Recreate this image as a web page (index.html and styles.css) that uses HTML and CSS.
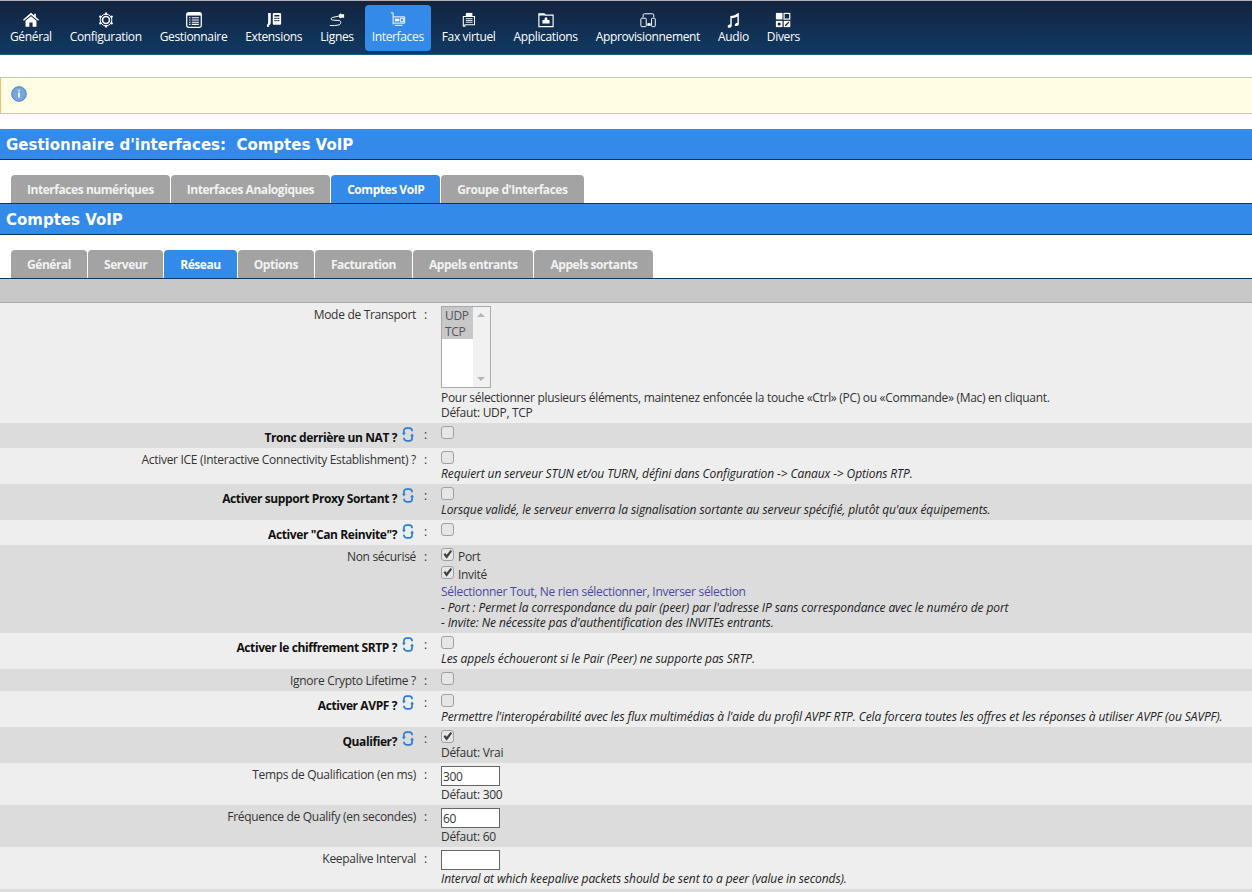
FILE: index.html
```html
<!DOCTYPE html>
<html lang="fr">
<head>
<meta charset="utf-8">
<title>Comptes VoIP</title>
<link rel="stylesheet" href="styles.css">
</head>
<body>
<svg class="defs" width="0" height="0" aria-hidden="true">
  <symbol id="refresh" viewBox="0 0 12 15">
    <path d="M1.9 6.5V4C1.9 2.3 3 1.2 4.6 1.2H7.4C9 1.2 10.1 2.3 10.1 4.2M10.1 8.5V11C10.1 12.7 9 13.8 7.4 13.8H4.6C3 13.8 1.9 12.7 1.9 10.8" fill="none" stroke="currentColor" stroke-width="1.7"/>
    <path d="M0 5.8H3.8L1.9 8.6ZM12 9.2H8.2L10.1 6.4Z" fill="currentColor"/>
  </symbol>
</svg>
<nav class="topnav">
  <a class="navitem"><svg class="ni" viewBox="0 0 20 18"><path fill="#fff" d="M10 0 14 3.4V1.2H16V5.1L20 8.6 18.8 10 10 2.8 1.2 10 0 8.6Z"/><path fill="#fff" d="M3.2 10 10 4.4 16.8 10V17.5H12V12H8V17.5H3.2Z"/></svg><span>Général</span></a>
  <a class="navitem"><svg class="ni" viewBox="0 0 18 18"><circle cx="9" cy="9" r="3.9" fill="none" stroke="#fff" stroke-width="1.8"/><circle cx="9" cy="9" r="6.6" fill="none" stroke="#fff" stroke-width="1.1"/><path stroke="#fff" stroke-width="2.4" d="M9 .5V3M9 15V17.5M1.6 4.7 3.8 6M14.2 12 16.4 13.3M1.6 13.3 3.8 12M14.2 6 16.4 4.7"/></svg><span>Configuration</span></a>
  <a class="navitem"><svg class="ni" viewBox="0 0 18 18"><rect x=".8" y=".8" width="16.4" height="16.4" rx="2" fill="none" stroke="#fff" stroke-width="1.4"/><path fill="#fff" d="M1 1H17V4H1Z"/><path stroke="#fff" stroke-width="1.3" d="M3.5 6.5H5M6.5 6.5H14.5M3.5 9H5M6.5 9H14.5M3.5 11.5H5M6.5 11.5H14.5M3.5 14H5M6.5 14H14.5"/></svg><span>Gestionnaire</span></a>
  <a class="navitem"><svg class="ni" viewBox="0 0 18 18"><path fill="#fff" d="M2.4 1H5.4V11.5C5.4 13.5 4.2 15 2.8 15.6L3.4 16.8H1.6L.8 15.2C1.6 14 2.4 13 2.4 11.5Z"/><path fill="#fff" fill-rule="evenodd" d="M7.6 2.4C7.6 1.6 8.2 1 9 1H15.6C16.4 1 17 1.6 17 2.4V13C17 13.8 16.4 14.4 15.6 14.4H9C8.2 14.4 7.6 13.8 7.6 13ZM9.4 3.5V5H15V3.5ZM9.4 6.5V8H11V6.5ZM11.6 6.5V8H13V6.5ZM13.6 6.5V8H15V6.5ZM9.4 9V10.5H11V9ZM11.6 9V10.5H13V9ZM13.6 9V10.5H15V9Z"/></svg><span>Extensions</span></a>
  <a class="navitem"><svg class="ni" viewBox="0 0 18 18"><path fill="none" stroke="#fff" stroke-width="1.1" d="M11 4.6 3.8 6.2C1.8 6.8 2 9 4 9.1L11.5 9.6C14 10 13.8 13.6 11.4 14.4 8.5 15.3 4 15.4 1 15.1"/><path fill="#fff" d="M11 3 13.6 1V2.6H17V6.4H13.6V7.4L11 5.8Z"/></svg><span>Lignes</span></a>
  <a class="navitem active"><svg class="ni" viewBox="0 0 18 18"><path fill="none" stroke="#fff" stroke-width="1.1" d="M1 1H3.5V14M3.5 5.5H16.5V12.5H3.5M5.5 15H14"/><rect x="5.5" y="7.5" width="5" height="3" fill="#fff"/><rect x="12" y="7" width="3" height="4" fill="none" stroke="#fff"/></svg><span>Interfaces</span></a>
  <a class="navitem"><svg class="ni" viewBox="0 0 18 18"><path fill="none" stroke="#fff" stroke-width="1.2" d="M2.6 5H15.2V14.4H4.4V16H2.6ZM6 2V5M12.2 5V1.6H6"/><path fill="#fff" d="M6 1H12.4V4.6H6Z"/><path stroke="#fff" d="M5.4 7.5H13M5.4 9.5H13M5.4 11.5H13"/></svg><span>Fax virtuel</span></a>
  <a class="navitem"><svg class="ni" viewBox="0 0 18 18"><path fill="none" stroke="#fff" stroke-width="1.3" d="M1 2H7L8.5 3.6H17V16.4H1Z"/><path fill="#fff" d="M1 2H7L8.5 4H1ZM5 9H7.5C7 7 8 6 9 6S11 7 10.5 9H13V13H5Z"/></svg><span>Applications</span></a>
  <a class="navitem"><svg class="ni" viewBox="0 0 18 18"><path fill="none" stroke="#fff" stroke-width="1.1" d="M3.5 6V3.5C3.5 2.4 4.2 2 5 2H14C15 2 15.5 2.6 15.5 3.5V6"/><rect x="1" y="7" width="6" height="9.5" rx="1" fill="none" stroke="#fff" stroke-width="1.1"/><rect x="13" y="7" width="4.2" height="9.5" rx="1" fill="none" stroke="#fff" stroke-width="1.1"/><rect x="8.4" y="12.5" width="3.4" height="3" fill="#fff"/><path stroke="#fff" d="M8 14.5H12.5"/></svg><span>Approvisionnement</span></a>
  <a class="navitem"><svg class="ni" viewBox="0 0 18 18"><path fill="#fff" d="M6 4.5C9 4.5 12 3 15.6 .8V13.4C15.6 15.2 13.6 16.2 12 15.8 10.6 15.4 10.6 13.6 12 12.8 12.8 12.4 13.4 12.3 14 12.5V5C11.5 6.2 9.5 6.8 7.6 7.1V15.4C7.6 17 5.6 18 4 17.6 2.6 17.2 2.6 15.4 4 14.6 4.8 14.2 5.4 14.1 6 14.3Z"/></svg><span>Audio</span></a>
  <a class="navitem"><svg class="ni" viewBox="0 0 18 18"><rect x="1" y="1" width="7.4" height="7.4" fill="#fff"/><rect x="10.2" y="1.6" width="6.4" height="6.4" fill="none" stroke="#fff" stroke-width="1.3"/><rect x="1" y="10" width="7.4" height="7" fill="#fff"/><rect x="9.8" y="10" width="7.4" height="7" fill="#fff"/><circle cx="4.7" cy="13.5" r="1.7" fill="#123"/><path stroke="#123" stroke-width="1.4" d="M11.5 15.5 15.5 11.5"/></svg><span>Divers</span></a>
</nav>

<div class="notice">
  <svg class="info" viewBox="0 0 16 16"><circle cx="8" cy="8" r="7.3" fill="#79a6e0" stroke="#4e7fc4"/><path fill="#fff" d="M7.2 3.8H8.8V5.3H7.2ZM7.2 6.6H8.8V11.6H7.2Z"/></svg>
</div>

<h1 class="title first">Gestionnaire d'interfaces:&nbsp; Comptes VoIP</h1>

<div class="tabs">
  <a class="tab">Interfaces numériques</a>
  <a class="tab">Interfaces Analogiques</a>
  <a class="tab on">Comptes VoIP</a>
  <a class="tab">Groupe d'Interfaces</a>
</div>

<h2 class="title second">Comptes VoIP</h2>

<div class="tabs tabs-sub">
  <a class="tab">Général</a>
  <a class="tab">Serveur</a>
  <a class="tab on">Réseau</a>
  <a class="tab">Options</a>
  <a class="tab">Facturation</a>
  <a class="tab">Appels entrants</a>
  <a class="tab">Appels sortants</a>
</div>

<div class="greybar"></div>

<div class="form">
  <div class="row light h120">
    <div class="lab">Mode de Transport</div><div class="colon">:</div>
    <div class="val">
      <div class="listbox">
        <div class="opts"><div class="opt">UDP</div><div class="opt">TCP</div></div>
        <div class="sbar"><i class="up"></i><i class="down"></i></div>
      </div>
      <div class="txt">Pour sélectionner plusieurs éléments, maintenez enfoncée la touche «Ctrl» (PC) ou «Commande» (Mac) en cliquant.</div>
      <div class="txt">Défaut: UDP, TCP</div>
    </div>
  </div>
  <div class="row dark icon-row">
    <div class="lab b">Tronc derrière un NAT ?<svg class="rf"><use href="#refresh"/></svg></div><div class="colon">:</div>
    <div class="val"><div class="chk"><input type="checkbox"></div></div>
  </div>
  <div class="row light">
    <div class="lab">Activer ICE (Interactive Connectivity Establishment) ?</div><div class="colon">:</div>
    <div class="val"><div class="chk"><input type="checkbox"></div><div class="txt em">Requiert un serveur STUN et/ou TURN, défini dans Configuration -&gt; Canaux -&gt; Options RTP.</div></div>
  </div>
  <div class="row dark">
    <div class="lab b">Activer support Proxy Sortant ?<svg class="rf"><use href="#refresh"/></svg></div><div class="colon">:</div>
    <div class="val"><div class="chk"><input type="checkbox"></div><div class="txt em">Lorsque validé, le serveur enverra la signalisation sortante au serveur spécifié, plutôt qu'aux équipements.</div></div>
  </div>
  <div class="row light icon-row">
    <div class="lab b">Activer "Can Reinvite"?<svg class="rf"><use href="#refresh"/></svg></div><div class="colon">:</div>
    <div class="val"><div class="chk"><input type="checkbox"></div></div>
  </div>
  <div class="row dark h88">
    <div class="lab">Non sécurisé</div><div class="colon">:</div>
    <div class="val">
      <label class="chk lbl"><input type="checkbox" checked>Port</label>
      <label class="chk lbl"><input type="checkbox" checked>Invité</label>
      <div class="txt link">Sélectionner Tout, Ne rien sélectionner, Inverser sélection</div>
      <div class="txt em">- Port : Permet la correspondance du pair (peer) par l'adresse IP sans correspondance avec le numéro de port</div>
      <div class="txt em">- Invite: Ne nécessite pas d'authentification des INVITEs entrants.</div>
    </div>
  </div>
  <div class="row light">
    <div class="lab b">Activer le chiffrement SRTP ?<svg class="rf"><use href="#refresh"/></svg></div><div class="colon">:</div>
    <div class="val"><div class="chk"><input type="checkbox"></div><div class="txt em">Les appels échoueront si le Pair (Peer) ne supporte pas SRTP.</div></div>
  </div>
  <div class="row dark">
    <div class="lab">Ignore Crypto Lifetime ?</div><div class="colon">:</div>
    <div class="val"><div class="chk"><input type="checkbox"></div></div>
  </div>
  <div class="row light">
    <div class="lab b">Activer AVPF ?<svg class="rf"><use href="#refresh"/></svg></div><div class="colon">:</div>
    <div class="val"><div class="chk"><input type="checkbox"></div><div class="txt em">Permettre l'interopérabilité avec les flux multimédias à l'aide du profil AVPF RTP. Cela forcera toutes les offres et les réponses à utiliser AVPF (ou SAVPF).</div></div>
  </div>
  <div class="row dark">
    <div class="lab b">Qualifier?<svg class="rf"><use href="#refresh"/></svg></div><div class="colon">:</div>
    <div class="val"><div class="chk"><input type="checkbox" checked></div><div class="txt">Défaut: Vrai</div></div>
  </div>
  <div class="row light h42">
    <div class="lab">Temps de Qualification (en ms)</div><div class="colon">:</div>
    <div class="val"><input class="field" type="text" value="300"><div class="txt">Défaut: 300</div></div>
  </div>
  <div class="row dark h42">
    <div class="lab">Fréquence de Qualify (en secondes)</div><div class="colon">:</div>
    <div class="val"><input class="field" type="text" value="60"><div class="txt">Défaut: 60</div></div>
  </div>
  <div class="row light h42">
    <div class="lab">Keepalive Interval</div><div class="colon">:</div>
    <div class="val"><input class="field" type="text"><div class="txt em">Interval at which keepalive packets should be sent to a peer (value in seconds).</div></div>
  </div>
  <div class="row dark"></div>
</div>
</body>
</html>
```
FILE: styles.css
```css
* { box-sizing: border-box; }
html, body { margin: 0; padding: 0; height: 892px; overflow: hidden; background: #fff; }
body { font-family: "Open Sans", "Noto Sans", sans-serif; font-size: 12px; letter-spacing: -0.3px; color: #333; }
.defs { position: absolute; }

.topnav {
  display: flex; gap: 4px; height: 55px; padding: 4px 3px 0;
  background: linear-gradient(#14233f, #0f3a63);
  border-top: 1px solid #aeb2b8; border-bottom: 1px solid #1d5a8c;
}
.navitem {
  display: flex; flex-direction: column; align-items: center;
  height: 46px; padding: 7px 7px 0; border-radius: 4px;
  color: #fff; font-size: 12px; letter-spacing: -0.35px; line-height: 17px; white-space: nowrap;
}
.navitem.active { background: #338ae8; }
.ni { width: 16px; height: 16px; display: block; flex: none; }

.notice {
  height: 37px; margin-top: 22px; padding: 8px 10px;
  background: #fffde3; border: 1px solid #f0c070; border-right: 0;
}
.info { width: 16px; height: 16px; display: block; }

.title {
  margin: 0; padding: 0 6px; color: #fff; background: #338ae8;
  font-family: "DejaVu Sans", sans-serif; font-weight: 700; font-size: 15px; letter-spacing: 0;
  line-height: 32px; border-bottom: 1px solid #0c3558;
}
.title.first { margin-top: 15px; height: 31px; }
.title.second { height: 32px; border-top: 1px solid #0c3558; }

.tabs { display: flex; gap: 1px; padding: 15px 0 0 11px; height: 43px; }
.tabs-sub { height: 44px; border-bottom: 1px solid #0c3558; }
.tab {
  height: 28px; padding: 0 16px; line-height: 29px; border-radius: 4px 4px 0 0;
  background: #a3a3a3; color: #f2f2f2; font-weight: 700; font-size: 12px; letter-spacing: -0.45px; white-space: nowrap;
}
.tab.on { background: #338ae8; color: #fff; }

.greybar { height: 24px; background: #c8c8c8; border-bottom: 1px solid #a8a8a8; }

.row { display: flex; padding: 3px 0; min-height: 22px; }
.light { background: #eeeeee; }
.dark { background: #dcdcdc; }
.h120 { min-height: 120px; }
.h88 { min-height: 88px; }
.h42 { min-height: 42px; }
.icon-row { min-height: 25px; }

.lab {
  width: 416px; height: 16px; flex: none; display: flex; justify-content: flex-end; align-items: flex-start;
  line-height: 18px; white-space: nowrap;
}
.lab.b { font-weight: 700; color: #111; padding-top: 3px; letter-spacing: -0.4px; }
.colon { width: 25px; height: 16px; flex: none; padding-left: 8px; line-height: 17px; }
.val { flex: 1; min-width: 0; }
.rf { width: 12px; height: 15px; color: #2a7fd5; margin: -2px 2px 0 5px; flex: none; }

.txt { line-height: 15px; white-space: nowrap; }
.em { font-style: italic; color: #222; letter-spacing: -0.1px; }
.link { color: #4a4a9c; margin-bottom: 1px; }

.chk { display: flex; align-items: flex-start; height: 15px; }
.lbl { height: 18px; line-height: 18px; }
.chk input {
  appearance: none; position: relative; width: 13px; height: 13px; margin: 0 4px 0 0; flex: none;
  border: 1px solid #a0a0a0; border-radius: 3px; background: #e6e6e6;
}
.chk input:checked::after {
  content: ""; position: absolute; inset: 0; background: #404040;
  clip-path: polygon(14% 50%, 28% 36%, 42% 52%, 78% 8%, 92% 20%, 42% 88%);
}

.listbox { display: flex; width: 50px; height: 82px; margin-bottom: 2px; background: #fff; border: 1px solid #aaa; }
.opts { flex: 1; }
.opt { height: 16px; padding-left: 3px; line-height: 18px; background: #c8c8c8; color: #555; }
.sbar { width: 17px; background: #f1f1f1; display: flex; flex-direction: column; justify-content: space-between; padding: 6px 4px; }
.sbar i { display: block; width: 0; height: 0; border: 4px solid transparent; }
.sbar .up { border-bottom-color: #b5b5b5; border-top-width: 0; }
.sbar .down { border-top-color: #b5b5b5; border-bottom-width: 0; }

.field {
  display: block; width: 59px; height: 20px; margin: 0 0 1px; padding: 0 1px;
  border: 1px solid #666; background: #fff; font: 12px "Open Sans", sans-serif; letter-spacing: -0.3px; color: #333;
}
```
